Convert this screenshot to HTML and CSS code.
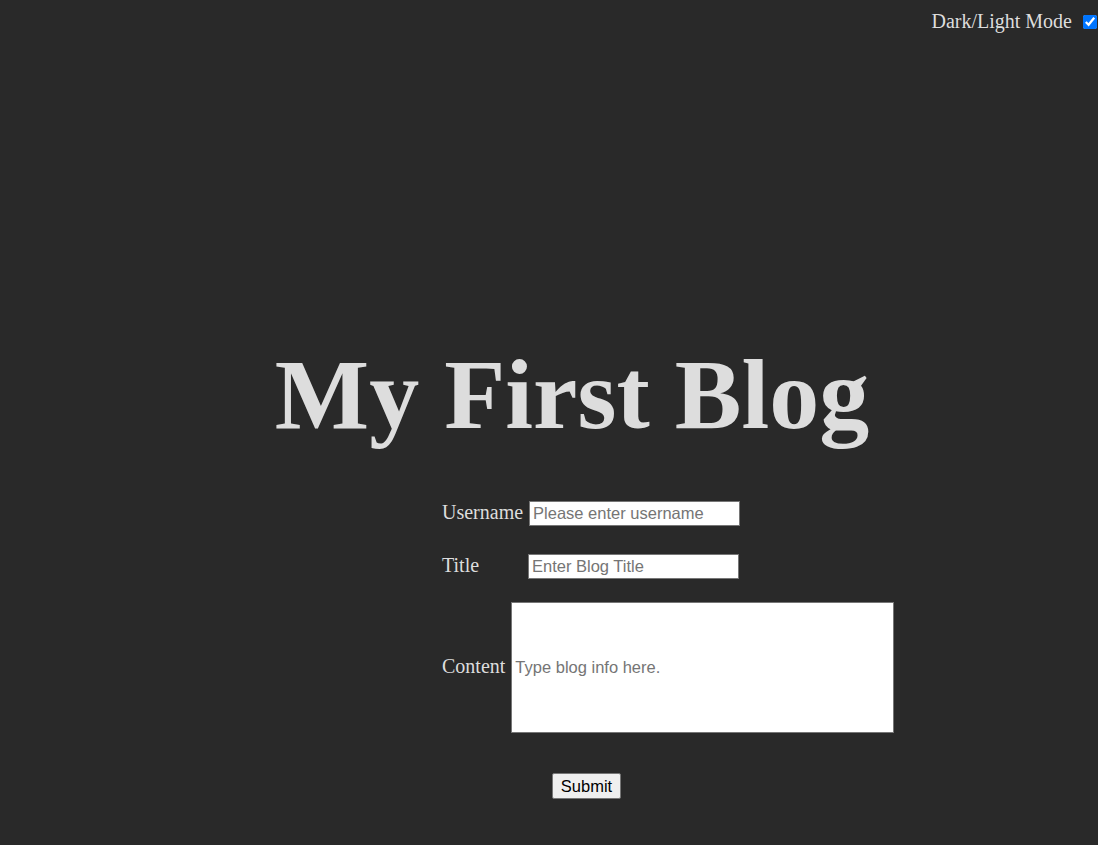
FILE: index.html
```html
<!DOCTYPE html>
<html lang="en">
<head>
<meta charset="utf-8">
<title>My First Blog</title>
<link rel="stylesheet" href="styles.css">
</head>
<body>
<header class="topbar">
  <label class="mode-label" for="mode">Dark/Light Mode</label>
  <input class="mode-toggle" type="checkbox" id="mode" checked>
</header>
<main class="page">
  <h1 class="hero">My First Blog</h1>
  <form class="blog-form">
    <div class="row">
      <label class="field-label" for="username">Username</label>
      <input class="field" type="text" id="username" placeholder="Please enter username">
    </div>
    <div class="row row-title">
      <label class="field-label title-label" for="title">Title</label>
      <input class="field" type="text" id="title" placeholder="Enter Blog Title">
    </div>
    <div class="row row-content">
      <label class="field-label" for="content">Content</label>
      <input class="field content-field" type="text" id="content" placeholder="Type blog info here.">
    </div>
    <div class="actions">
      <button class="submit" type="button">Submit</button>
    </div>
  </form>
</main>
</body>
</html>
```

FILE: styles.css
```css
html, body {
  margin: 0;
  padding: 0;
}

body {
  background: #292929;
  color: #dddddd;
  font-family: "Liberation Serif", "Times New Roman", serif;
  height: 845px;
  overflow: hidden;
}

.topbar {
  display: flex;
  justify-content: flex-end;
  align-items: center;
  gap: 11px;
  padding: 10px 1px 0 0;
  font-size: 20px;
}

.mode-toggle {
  margin: 0;
  width: 14px;
  height: 14px;
  accent-color: #0075ff;
}

.page {
  display: flex;
  flex-direction: column;
}

.hero {
  margin: 304px 0 0 0;
  padding-left: 46px;
  text-align: center;
  font-size: 100px;
  font-weight: bold;
  line-height: 1.15;
  color: #dddddd;
}

.blog-form {
  margin: 49px 0 0 442px;
  font-size: 20px;
  display: flex;
  flex-direction: column;
}

.row {
  display: flex;
  align-items: baseline;
  gap: 6px;
}

.row-title {
  margin-top: 28px;
}

.row-content {
  margin-top: 23px;
}

.title-label {
  width: 80px;
}

.field {
  box-sizing: border-box;
  width: 211px;
  height: 25px;
  padding: 1px 3px;
  border: 1px solid #767676;
  border-radius: 0;
  background: #ffffff;
  color: #000;
  font-family: "Liberation Sans", Arial, sans-serif;
  font-size: 16.5px;
  margin: 0;
}

.field::placeholder {
  color: #757575;
}

.content-field {
  width: 383px;
  height: 131px;
}

.actions {
  padding-left: 110px;
  margin-top: 40px;
}

.submit {
  box-sizing: border-box;
  width: 69px;
  height: 26px;
  padding: 1px 6px;
  margin: 0;
  font-family: "Liberation Sans", Arial, sans-serif;
  font-size: 16.5px;
  color: #000;
  background: #efefef;
  border: 1px solid #767676;
  border-radius: 2px;
}
```
